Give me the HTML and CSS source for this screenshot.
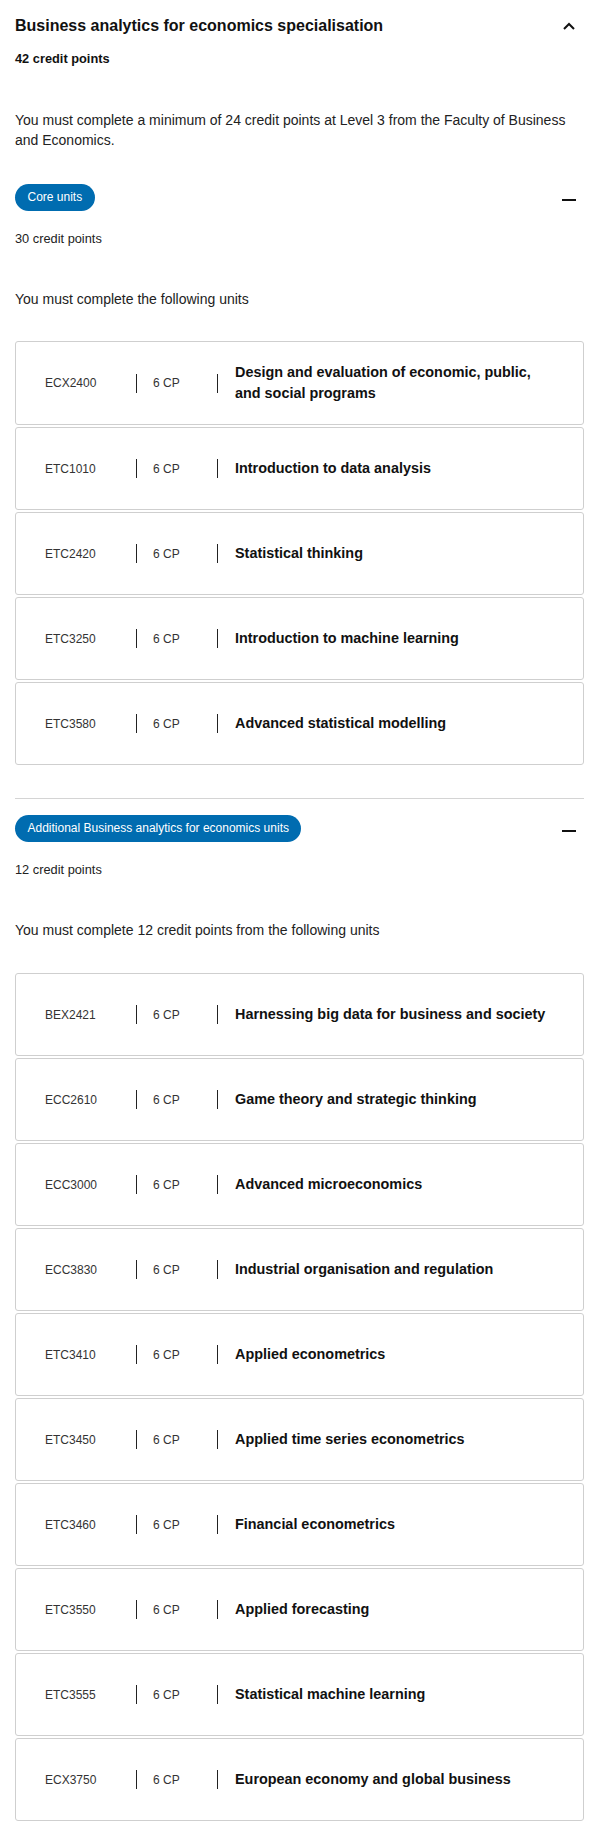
FILE: index.html
```html
<!DOCTYPE html>
<html lang="en">
<head>
    <meta charset="UTF-8">
    <title>Business analytics for economics specialisation</title>
    <link rel="stylesheet" href="styles.css">
</head>
<body>

    <div class="spec">
        <div class="spec-head">
            <h2 class="spec-title">Business analytics for economics specialisation</h2>
            <button class="toggle" aria-label="Collapse">
                <svg width="12" height="8" viewBox="0 0 12 8"><polyline points="1,7 6,2 11,7" fill="none" stroke="#111" stroke-width="2"/></svg>
            </button>
        </div>
        <p class="spec-credits">42 credit points</p>
        <p class="spec-desc">You must complete a minimum of 24 credit points at Level 3 from the Faculty of Business and Economics.</p>

        <!-- Core units -->
        <div class="group">
            <div class="group-head">
                <span class="pill">Core units</span>
                <button class="toggle" aria-label="Collapse"><span class="minus"></span></button>
            </div>
            <p class="group-credits">30 credit points</p>
            <p class="group-desc">You must complete the following units</p>
            <ul class="unit-list">
                <li class="unit"><span class="unit-code">ECX2400</span><span class="sep"></span><span class="unit-cp">6 CP</span><span class="sep"></span><span class="unit-title">Design and evaluation of economic, public, and social programs</span></li>
                <li class="unit"><span class="unit-code">ETC1010</span><span class="sep"></span><span class="unit-cp">6 CP</span><span class="sep"></span><span class="unit-title">Introduction to data analysis</span></li>
                <li class="unit"><span class="unit-code">ETC2420</span><span class="sep"></span><span class="unit-cp">6 CP</span><span class="sep"></span><span class="unit-title">Statistical thinking</span></li>
                <li class="unit"><span class="unit-code">ETC3250</span><span class="sep"></span><span class="unit-cp">6 CP</span><span class="sep"></span><span class="unit-title">Introduction to machine learning</span></li>
                <li class="unit"><span class="unit-code">ETC3580</span><span class="sep"></span><span class="unit-cp">6 CP</span><span class="sep"></span><span class="unit-title">Advanced statistical modelling</span></li>
            </ul>
        </div>

        <!-- Additional units -->
        <div class="group group-divided">
            <div class="group-head">
                <span class="pill">Additional Business analytics for economics units</span>
                <button class="toggle" aria-label="Collapse"><span class="minus"></span></button>
            </div>
            <p class="group-credits">12 credit points</p>
            <p class="group-desc">You must complete 12 credit points from the following units</p>
            <ul class="unit-list">
                <li class="unit"><span class="unit-code">BEX2421</span><span class="sep"></span><span class="unit-cp">6 CP</span><span class="sep"></span><span class="unit-title">Harnessing big data for business and society</span></li>
                <li class="unit"><span class="unit-code">ECC2610</span><span class="sep"></span><span class="unit-cp">6 CP</span><span class="sep"></span><span class="unit-title">Game theory and strategic thinking</span></li>
                <li class="unit"><span class="unit-code">ECC3000</span><span class="sep"></span><span class="unit-cp">6 CP</span><span class="sep"></span><span class="unit-title">Advanced microeconomics</span></li>
                <li class="unit"><span class="unit-code">ECC3830</span><span class="sep"></span><span class="unit-cp">6 CP</span><span class="sep"></span><span class="unit-title">Industrial organisation and regulation</span></li>
                <li class="unit"><span class="unit-code">ETC3410</span><span class="sep"></span><span class="unit-cp">6 CP</span><span class="sep"></span><span class="unit-title">Applied econometrics</span></li>
                <li class="unit"><span class="unit-code">ETC3450</span><span class="sep"></span><span class="unit-cp">6 CP</span><span class="sep"></span><span class="unit-title">Applied time series econometrics</span></li>
                <li class="unit"><span class="unit-code">ETC3460</span><span class="sep"></span><span class="unit-cp">6 CP</span><span class="sep"></span><span class="unit-title">Financial econometrics</span></li>
                <li class="unit"><span class="unit-code">ETC3550</span><span class="sep"></span><span class="unit-cp">6 CP</span><span class="sep"></span><span class="unit-title">Applied forecasting</span></li>
                <li class="unit"><span class="unit-code">ETC3555</span><span class="sep"></span><span class="unit-cp">6 CP</span><span class="sep"></span><span class="unit-title">Statistical machine learning</span></li>
                <li class="unit"><span class="unit-code">ECX3750</span><span class="sep"></span><span class="unit-cp">6 CP</span><span class="sep"></span><span class="unit-title">European economy and global business</span></li>
            </ul>
        </div>
    </div>

</body>
</html>
```

FILE: styles.css
```css
body {
    font-family: "Liberation Sans", Arial, sans-serif;
    background-color: #fff;
    margin: 0;
    padding: 14px 16px 20px 15px;
    color: #222;
}

p {
    margin: 0;
}

.spec-head,
.group-head {
    display: flex;
    justify-content: space-between;
    align-items: center;
}

.spec-title {
    margin: 0;
    font-size: 16px;
    line-height: 24px;
    font-weight: bold;
    color: #111;
}

.toggle {
    width: 30px;
    height: 24px;
    padding: 0;
    border: none;
    background: none;
    display: flex;
    justify-content: center;
    align-items: center;
    cursor: pointer;
}

.minus {
    display: block;
    width: 14px;
    height: 2px;
    margin-top: 4px;
    background-color: #111;
}

.spec-credits {
    margin-top: 11px;
    font-size: 12.8px;
    line-height: 20px;
    font-weight: bold;
    color: #111;
}

.spec-desc {
    margin-top: 41px;
    font-size: 14px;
    line-height: 20px;
}

.group {
    margin-top: 34px;
}

.group-divided {
    margin-top: 33px;
    padding-top: 16px;
    border-top: 1px solid #d4d4d4;
}

.group-divided .unit-list {
    margin-top: 33px;
}

.pill {
    display: inline-block;
    padding: 6px 12.5px;
    font-size: 12px;
    line-height: 15px;
    color: #fff;
    background-color: #006cb0;
    border-radius: 14px;
}

.group-credits {
    margin-top: 18px;
    font-size: 12.8px;
    line-height: 20px;
}

.group-desc {
    margin-top: 40px;
    font-size: 14px;
    line-height: 20px;
}

.unit-list {
    list-style: none;
    margin: 32px 0 0;
    padding: 0;
}

.unit {
    box-sizing: border-box;
    min-height: 83px;
    margin-bottom: 2px;
    padding: 19.5px 28px 19.5px 29px;
    display: flex;
    align-items: center;
    border: 1px solid #cfcfcf;
    border-radius: 3px;
}

.unit:last-child {
    margin-bottom: 0;
}

.unit-code {
    flex: 0 0 91px;
    font-size: 12px;
    color: #333;
}

.sep {
    flex: 0 0 1px;
    height: 19px;
    background-color: #222;
}

.unit-cp {
    box-sizing: border-box;
    flex: 0 0 80px;
    padding-left: 16px;
    font-size: 12px;
    color: #333;
}

.unit-title {
    flex: 1;
    padding-left: 17px;
    font-size: 14.4px;
    line-height: 21.6px;
    font-weight: bold;
    color: #111;
}
```
